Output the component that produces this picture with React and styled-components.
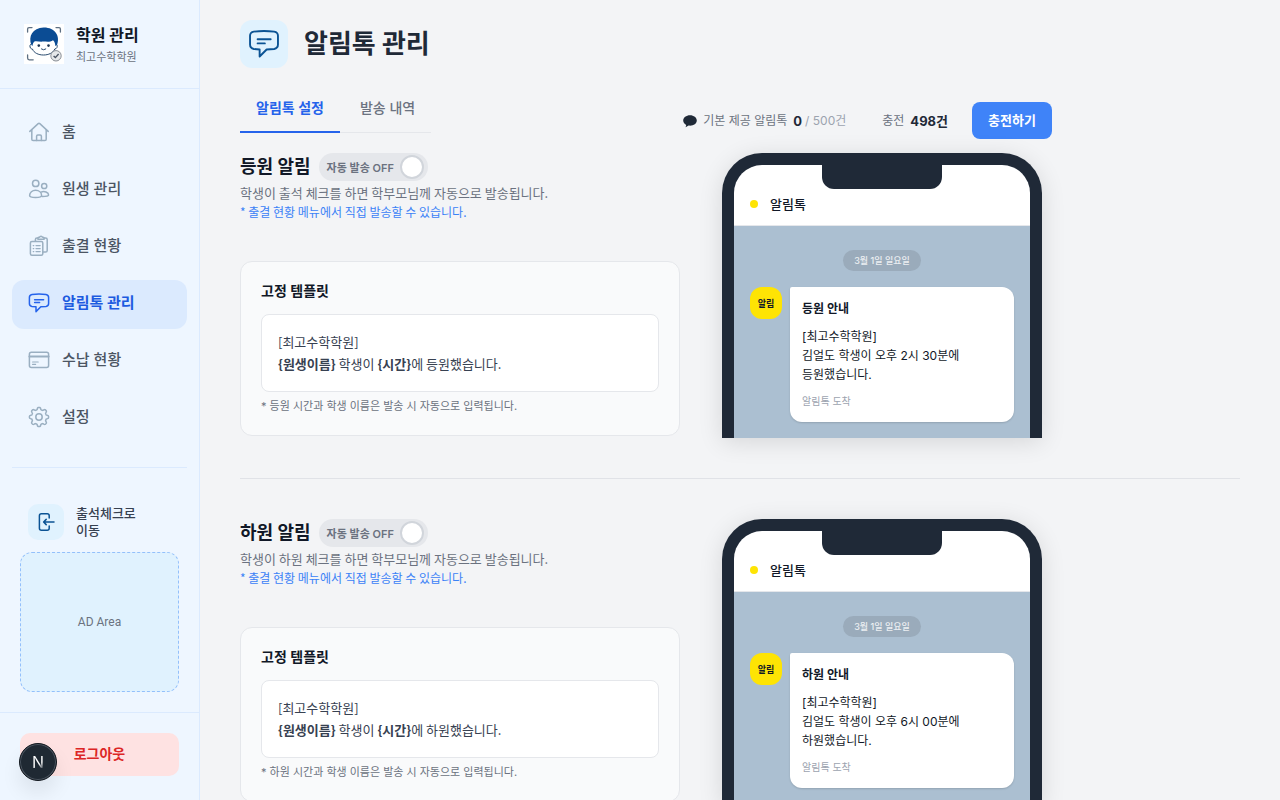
import React from 'react';
import styled, { createGlobalStyle, css } from 'styled-components';

const GlobalStyle = createGlobalStyle`
  *, *::before, *::after { box-sizing: border-box; }
  body {
    margin: 0;
    background: #f3f4f6;
    color: #111827;
    font-family: Inter, 'Noto Sans CJK KR', sans-serif;
    font-size: 13px;
    -webkit-font-smoothing: antialiased;
  }
  button, input { font: inherit; }
  h1, h2, h3, p { margin: 0; }
`;

const proseFont = css`
  font-family: 'Noto Sans CJK KR', sans-serif;
`;

const Layout = styled.div`
  display: flex;
  height: 100vh;
`;

const Sidebar = styled.aside`
  display: flex;
  flex-direction: column;
  flex: 0 0 200px;
  background: #eef6ff;
  border-right: 1px solid #dbeafe;
  overflow: hidden;
`;

const Brand = styled.header`
  display: flex;
  align-items: center;
  gap: 12px;
  padding: 24px;
  border-bottom: 1px solid #dbeafe;
`;

const BrandText = styled.div`
  display: flex;
  flex-direction: column;
  gap: 4px;
`;

const BrandName = styled.strong`
  font-size: 16px;
  line-height: 22px;
  white-space: nowrap;
`;

const BrandSub = styled.span`
  font-size: 11px;
  line-height: 14px;
  color: #6b7280;
`;

const Nav = styled.nav`
  display: flex;
  flex-direction: column;
  gap: 8px;
  padding: 20px 12px 24px;
`;

const NavLink = styled.a`
  display: flex;
  align-items: center;
  gap: 12px;
  min-height: 49px;
  padding: 0 16px 3px;
  border-radius: 12px;
  font-size: 15px;
  font-weight: 500;
  line-height: 22px;
  text-decoration: none;
  color: #4b5563;
  svg { color: #9aafc1; }
  ${(p) => p.$active && css`
    background: #dbeafe;
    color: #1d5be0;
    font-weight: 700;
    svg { color: #2563eb; }
  `}
`;

const NavDivider = styled.hr`
  width: auto;
  margin: 0 12px;
  border: 0;
  border-top: 1px solid #dbeafe;
`;

const CheckInLink = styled.a`
  display: flex;
  align-items: center;
  gap: 12px;
  margin: 24px 12px 0;
  padding: 12px 16px;
  color: #374151;
  font-weight: 500;
  line-height: 17px;
  text-decoration: none;
`;

const CheckInIcon = styled.span`
  display: grid;
  place-items: center;
  flex: 0 0 36px;
  height: 36px;
  border-radius: 10px;
  background: #e0f2fe;
  color: #0b5394;
`;

const AdArea = styled.div`
  display: grid;
  place-items: center;
  margin: 0 20px 20px;
  height: 140px;
  border: 1px dashed #93c0fb;
  border-radius: 12px;
  background: #e0f2fe;
  color: #6b7280;
  font-family: Roboto, sans-serif;
  font-size: 12px;
`;

const SidebarFooter = styled.footer`
  margin-top: auto;
  padding: 20px 20px 24px;
  border-top: 1px solid #dbeafe;
`;

const LogoutButton = styled.button`
  display: block;
  width: 100%;
  height: 43px;
  padding: 0 0 4px;
  border: 0;
  border-radius: 10px;
  background: #fee2e2;
  color: #dc2626;
  font-size: 14px;
  font-weight: 600;
`;

const DevBadge = styled.button`
  position: fixed;
  left: 19px;
  bottom: 19px;
  width: 38px;
  height: 38px;
  padding: 0;
  border: 1px solid #12181f;
  border-radius: 50%;
  background: #1f2933;
  box-shadow: inset 0 0 0 1px #4b5560, 0 12px 20px rgba(0, 0, 0, 0.08);
  font-size: 16px;
  line-height: 36px;
`;

const DevBadgeMark = styled.span`
  background: linear-gradient(150deg, #ffffff 60%, rgba(255, 255, 255, 0.3) 80%);
  background-clip: text;
  color: transparent;
`;

const Main = styled.main`
  flex: 1;
  min-width: 0;
  padding: 20px 40px;
  overflow-y: auto;
  scrollbar-width: none;
`;

const PageHeader = styled.header`
  display: flex;
  align-items: center;
  gap: 16px;
`;

const PageIcon = styled.span`
  display: grid;
  place-items: center;
  width: 48px;
  height: 48px;
  border-radius: 12px;
  background: #e0f2fe;
  color: #0b5394;
`;

const PageTitle = styled.h1`
  font-size: 26px;
  font-weight: 700;
  line-height: 36px;
  color: #1f2937;
`;

const Toolbar = styled.div`
  display: flex;
  align-items: flex-start;
  justify-content: space-between;
  max-width: 812px;
  margin: 16px 0 14px;
`;

const Tabs = styled.div`
  display: flex;
  gap: 4px;
  border-bottom: 1px solid #e5e7eb;
`;

const Tab = styled.button`
  height: 49px;
  margin-bottom: -1px;
  padding: 0 16px 2px;
  border: 0;
  border-bottom: 2px solid ${(p) => (p.$active ? '#2563eb' : 'transparent')};
  background: none;
  color: ${(p) => (p.$active ? '#2563eb' : '#6b7280')};
  font-size: 14px;
  font-weight: ${(p) => (p.$active ? 600 : 500)};
`;

const Usage = styled.div`
  display: flex;
  align-items: center;
  padding-top: 18px;
  gap: 24px;
`;

const UsageItem = styled.span`
  display: flex;
  align-items: center;
  gap: 6px;
  margin-right: ${(p) => (p.$spaced ? '12px' : '0')};
  color: #6b7280;
  font-size: 12px;
  line-height: 18px;
  white-space: nowrap;
`;

const Count = styled.strong`
  color: #1f2937;
  font-size: 13px;
`;

const Quota = styled.span`
  color: #9ca3af;
  margin-left: -3px;
`;

const ChargeButton = styled.button`
  width: 80px;
  height: 37px;
  padding: 0 0 3px;
  border: 0;
  border-radius: 8px;
  background: #3f83f8;
  color: #ffffff;
  font-size: 13px;
  font-weight: 700;
`;

const Section = styled.section`
  display: grid;
  grid-template-columns: minmax(0, 440px) minmax(320px, 340px);
  gap: 32px;
  & + & {
    margin-top: 40px;
    padding-top: 40px;
    border-top: 1px solid #e0e2e7;
  }
`;

const SettingColumn = styled.div`
  display: flex;
  flex-direction: column;
`;

const SectionHead = styled.div`
  display: flex;
  align-items: center;
  gap: 8px;
`;

const SectionTitle = styled.h2`
  font-size: 18px;
  font-weight: 700;
  line-height: 28px;
`;

const Switch = styled.label`
  display: flex;
  align-items: center;
  gap: 6px;
  height: 28px;
  padding: 0 4px 0 8px;
  border-radius: 14px;
  background: #e5e7eb;
  color: #6b7280;
  font-size: 11px;
  font-weight: 600;
  white-space: nowrap;
`;

const Knob = styled.input`
  appearance: none;
  width: 24px;
  height: 24px;
  margin: 0;
  border: 2px solid #d1d5db;
  border-radius: 50%;
  background: #ffffff;
`;

const Description = styled.p`
  ${proseFont}
  margin-top: 2px;
  color: #6b7280;
  line-height: 20px;
`;

const Hint = styled.p`
  ${proseFont}
  color: #3b82f6;
  font-size: 12px;
  line-height: 18px;
`;

const TemplateCard = styled.div`
  margin-top: 40px;
  padding: 20px;
  border: 1px solid #e5e7eb;
  border-radius: 12px;
  background: #f9fafb;
`;

const TemplateTitle = styled.h3`
  font-size: 14px;
  font-weight: 600;
  line-height: 18px;
`;

const TemplateBody = styled.p`
  ${proseFont}
  margin-top: 14px;
  padding: 16px;
  border: 1px solid #e5e7eb;
  border-radius: 8px;
  background: #ffffff;
  color: #374151;
  line-height: 22px;
`;

const TemplateNote = styled.p`
  margin-top: 5px;
  color: #6b7280;
  font-size: 11px;
  line-height: 18px;
`;

const Phone = styled.div`
  position: relative;
  justify-self: center;
  width: 320px;
  border: 12px solid #1f2937;
  border-bottom: 0;
  border-radius: 40px 40px 0 0;
  background: #1f2937;
  box-shadow: 0 4px 24px rgba(0, 0, 0, 0.12);
`;

const Notch = styled.div`
  position: absolute;
  top: 0;
  left: 50%;
  width: 120px;
  height: 24px;
  margin-left: -60px;
  border-radius: 0 0 12px 12px;
  background: #1f2937;
`;

const PhoneHeader = styled.div`
  display: flex;
  align-items: center;
  gap: 12px;
  padding: 30px 16px 12px;
  border-bottom: 1px solid #e5e7eb;
  border-radius: 28px 28px 0 0;
  background: #ffffff;
  font-weight: 500;
  line-height: 18px;
`;

const Dot = styled.span`
  width: 8px;
  height: 8px;
  border-radius: 50%;
  background: #fee404;
`;

const Chat = styled.div`
  display: flex;
  flex-direction: column;
  align-items: center;
  gap: 16px;
  padding: 24px 16px 16px;
  background: #abbfd1;
`;

const DatePill = styled.span`
  padding: 0 11px;
  border-radius: 11px;
  background: #9aabbb;
  color: #eceff2;
  font-size: 9px;
  font-weight: 500;
  line-height: 21px;
`;

const MessageRow = styled.div`
  display: flex;
  align-items: flex-start;
  gap: 8px;
  width: 100%;
`;

const Avatar = styled.span`
  display: grid;
  place-items: center;
  flex: 0 0 32px;
  height: 32px;
  border-radius: 12px;
  background: #fee404;
  font-size: 9px;
  font-weight: 700;
`;

const Bubble = styled.div`
  flex: 1;
  padding: 12px;
  border-radius: 2px 12px 12px 12px;
  background: #ffffff;
  box-shadow: 0 1px 2px rgba(0, 0, 0, 0.15);
  font-size: 12px;
  line-height: 19px;
`;

const BubbleTitle = styled.p`
  margin-bottom: 8px;
  font-weight: 700;
  line-height: 20px;
`;

const BubbleFoot = styled.p`
  margin-top: 8px;
  color: #9ca3af;
  font-size: 10px;
  line-height: 18px;
`;

const LineIcon = ({ size = 22, width = 1.5, children }) => (
  <svg width={size} height={size} viewBox="0 0 22 22" fill="none" stroke="currentColor"
    strokeWidth={width} strokeLinecap="round" strokeLinejoin="round" aria-hidden="true">
    {children}
  </svg>
);

const HomeShape = () => (
  <>
    <path d="M1.800 10.400 10.200 2.600q.8-.7 1.600 0l8.400 7.800" />
    <path d="M3.800 9v9.200q0 1.300 1.300 1.300h11.800q1.300 0 1.300-1.300V9" />
    <path d="M8.600 19.400v-4.200q0-1.200 1.200-1.200h2.400q1.200 0 1.200 1.200v4.200" />
  </>
);

const PeopleShape = () => (
  <>
    <circle cx="7.700" cy="5.400" r="3.200" />
    <circle cx="16.200" cy="8" r="2.600" />
    <path d="M1.600 17.600c0-3.200 2.700-5.300 6-5.300s6 2.100 6 5.300c0 1.300-1.500 2-6 2s-6-.7-6-2Z" />
    <path d="M13 14.200c3.300-1.600 7.600.2 7.600 2.800 0 1.100-1.900 1.500-6.400 1.500" />
  </>
);

const ClipboardShape = () => (
  <>
    <path d="M7.400 6V4.400q0-1.500 1.500-1.500h.9M16.200 2.900h1.400q1.600 0 1.600 1.600v11q0 1.600-1.600 1.600h-2.600" />
    <path d="M9.900 4.300V3.200q0-.9.9-.9h.7q.4-1.100 1.500-1.100t1.500 1.100h.7q.9 0 .9.900v1.100Z" />
    <rect x="2.400" y="6.600" width="12.400" height="13.600" rx="1.500" />
    <path strokeWidth="1.200" d="M5.200 10.600h.6M8 10.600h4.200M5.200 13.600h.6M8 13.600h4.200M5.200 16.600h.6M8 16.600h4.200" />
  </>
);

const TalkShape = () => (
  <>
    <path d="M4 2.500Q11 1.600 18 2.500 20.600 2.900 20.600 5.400V11.400Q20.600 14 18 14.400L12.800 14.800 8 19.600V14.800L4 14.400Q1.400 14 1.400 11.400V5.400Q1.400 2.900 4 2.500Z" />
    <path d="M6.600 7.700h9M6.600 10.600h5" />
  </>
);

const CardShape = () => (
  <>
    <rect x="1.400" y="3.200" width="19.200" height="15.400" rx="2" />
    <path strokeWidth="2" d="M1.400 7.600h19.200" />
    <path d="M4.600 13h5.600M4.600 15.400h3" strokeWidth="1.200" />
  </>
);

const GEAR_POINTS = Array.from({ length: 128 }, (_, i) => {
  const angle = (i / 128) * Math.PI * 2;
  const radius = 8.5 + 1.1 * Math.tanh(2.2 * Math.cos(8 * angle));
  return `${(11 + radius * Math.cos(angle)).toFixed(2)},${(11 + radius * Math.sin(angle)).toFixed(2)}`;
}).join(' ');

const GearShape = () => (
  <>
    <polygon points={GEAR_POINTS} />
    <circle cx="11" cy="11" r="3.200" />
  </>
);

const EnterShape = () => (
  <>
    <path d="M14.200 7V4.800q0-2-2-2H6.400q-2 0-2 2v12.400q0 2 2 2h5.800q2 0 2-2V15" />
    <path d="M19 11H8.800M11.200 8.400 8.600 11l2.600 2.600" />
  </>
);

const BrandLogo = () => (
  <svg width="40" height="40" viewBox="0 0 40 40" fill="none" aria-hidden="true">
    <rect width="40" height="40" fill="#fff" />
    <path d="M3.600 8V5q0-1.400 1.400-1.400h3M32 3.600h3q1.400 0 1.400 1.400v3M3.600 31v3q0 1.800 1.600 1.800h4"
      stroke="#5d6f82" strokeWidth="1.300" strokeLinecap="round" />
    <path d="M7.400 20C5.200 20.300 5.400 25 8.400 25 10 29 14.500 31 19.500 31s9.500-2 11.300-6c3-.2 3.200-4.800.8-5"
      fill="#fff" stroke="#27496d" strokeWidth="1" />
    <path d="M7.400 21C4 12.500 8.500 3.600 19.600 3.400 31 3.200 36.600 12 33 21l-1.700 1c0-2.400-.8-4.400-2.300-5.700-3.500 2.400-7.500 1-10.400 1.300-3 .3-5.600-.8-7.800-.3-1.700 1-2 3-2.300 4.600Z" fill="#0b4c94" />
    <circle cx="14.800" cy="21.600" r="1.300" fill="#1c3350" />
    <circle cx="24.500" cy="21.600" r="1.300" fill="#1c3350" />
    <path d="M17.400 25q2.200 1.800 4.400 0" stroke="#27496d" strokeLinecap="round" />
    <circle cx="32" cy="31.800" r="5.200" fill="#e6e8ea" stroke="#8a8f96" />
    <path d="m29.600 31.900 1.800 1.700 3.200-3.600" stroke="#4b5563" strokeWidth="1.400" />
  </svg>
);

const BubbleGlyph = () => (
  <svg width="14" height="14" viewBox="0 0 14 14" fill="#1f2937" aria-hidden="true">
    <path d="M7 1.200C3.200 1.200.2 3.500.2 6.500c0 1.900 1.200 3.500 3 4.400l-.6 2.400 3-1.700c.5.100.9.1 1.400.1 3.800 0 6.800-2.300 6.800-5.200S10.800 1.200 7 1.200Z" />
  </svg>
);

const NAV = [
  { label: '홈', Shape: HomeShape },
  { label: '원생 관리', Shape: PeopleShape },
  { label: '출결 현황', Shape: ClipboardShape },
  { label: '알림톡 관리', Shape: TalkShape, active: true },
  { label: '수납 현황', Shape: CardShape },
  { label: '설정', Shape: GearShape },
];

const ALERTS = [
  { kind: '등원', trigger: '출석', time: '오후 2시 30분' },
  { kind: '하원', trigger: '하원', time: '오후 6시 00분' },
];

const AlertSection = ({ kind, trigger, time }) => (
  <Section>
    <SettingColumn>
      <SectionHead>
        <SectionTitle>{kind} 알림</SectionTitle>
        <Switch>
          자동 발송 OFF
          <Knob type="checkbox" role="switch" />
        </Switch>
      </SectionHead>
      <Description>학생이 {trigger} 체크를 하면 학부모님께 자동으로 발송됩니다.</Description>
      <Hint>* 출결 현황 메뉴에서 직접 발송할 수 있습니다.</Hint>
      <TemplateCard>
        <TemplateTitle>고정 템플릿</TemplateTitle>
        <TemplateBody>
          [최고수학학원]<br />
          <strong>{'{원생이름}'}</strong> 학생이 <strong>{'{시간}'}</strong>에 {kind}했습니다.
        </TemplateBody>
        <TemplateNote>* {kind} 시간과 학생 이름은 발송 시 자동으로 입력됩니다.</TemplateNote>
      </TemplateCard>
    </SettingColumn>
    <Phone>
      <PhoneHeader><Dot />알림톡</PhoneHeader>
      <Notch />
      <Chat>
        <DatePill>3월 1일 일요일</DatePill>
        <MessageRow>
          <Avatar>알림</Avatar>
          <Bubble>
            <BubbleTitle>{kind} 안내</BubbleTitle>
            <p>[최고수학학원]<br />김얼도 학생이 {time}에<br />{kind}했습니다.</p>
            <BubbleFoot>알림톡 도착</BubbleFoot>
          </Bubble>
        </MessageRow>
      </Chat>
    </Phone>
  </Section>
);

export default function App() {
  return (
    <Layout>
      <GlobalStyle />
      <Sidebar>
        <Brand>
          <BrandLogo />
          <BrandText>
            <BrandName>학원 관리</BrandName>
            <BrandSub>최고수학학원</BrandSub>
          </BrandText>
        </Brand>
        <Nav>
          {NAV.map(({ label, Shape, active }) => (
            <NavLink key={label} href="#" $active={active} aria-current={active ? 'page' : undefined}>
              <LineIcon><Shape /></LineIcon>
              {label}
            </NavLink>
          ))}
        </Nav>
        <NavDivider />
        <CheckInLink href="#">
          <CheckInIcon><LineIcon><EnterShape /></LineIcon></CheckInIcon>
          <span>출석체크로<br />이동</span>
        </CheckInLink>
        <AdArea>AD Area</AdArea>
        <SidebarFooter>
          <LogoutButton type="button">로그아웃</LogoutButton>
        </SidebarFooter>
      </Sidebar>
      <Main>
        <PageHeader>
          <PageIcon><LineIcon size={32} width={1.3}><TalkShape /></LineIcon></PageIcon>
          <PageTitle>알림톡 관리</PageTitle>
        </PageHeader>
        <Toolbar>
          <Tabs role="tablist">
            <Tab type="button" role="tab" aria-selected="true" $active>알림톡 설정</Tab>
            <Tab type="button" role="tab" aria-selected="false">발송 내역</Tab>
          </Tabs>
          <Usage>
            <UsageItem $spaced>
              <BubbleGlyph />
              기본 제공 알림톡 <Count>0</Count> <Quota>/ 500건</Quota>
            </UsageItem>
            <UsageItem>충전 <Count>498건</Count></UsageItem>
            <ChargeButton type="button">충전하기</ChargeButton>
          </Usage>
        </Toolbar>
        {ALERTS.map((alert) => <AlertSection key={alert.kind} {...alert} />)}
      </Main>
      <DevBadge type="button"><DevBadgeMark>N</DevBadgeMark></DevBadge>
    </Layout>
  );
}
